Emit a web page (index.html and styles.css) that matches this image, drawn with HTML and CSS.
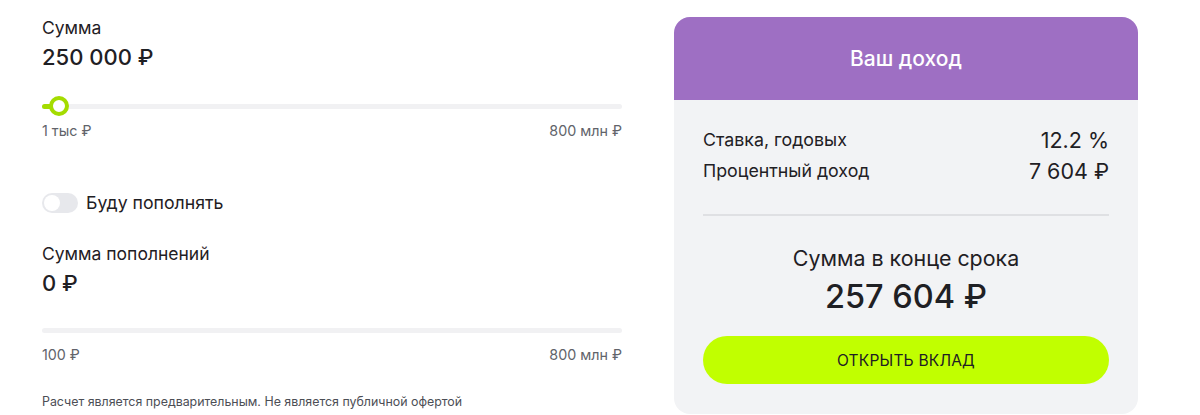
FILE: index.html
```html
<!DOCTYPE html>
<html lang="ru">
<head>
<meta charset="utf-8">
<link rel="stylesheet" href="styles.css">
</head>
<body>
<div class="page">
  <div class="calc">
    <div class="field">
      <div class="label">Сумма</div>
      <div class="value">250 000 ₽</div>
      <div class="slider">
        <div class="track"><div class="fill" style="width:17px"></div><div class="thumb" style="left:17px"></div></div>
      </div>
      <div class="range"><span>1 тыс ₽</span><span>800 млн ₽</span></div>
    </div>
    <div class="toggle-row">
      <div class="toggle"><div class="knob"></div></div>
      <span class="toggle-label">Буду пополнять</span>
    </div>
    <div class="field field2">
      <div class="label">Сумма пополнений</div>
      <div class="value">0 ₽</div>
      <div class="slider">
        <div class="track"></div>
      </div>
      <div class="range"><span>100 ₽</span><span>800 млн ₽</span></div>
    </div>
    <div class="note">Расчет является предварительным. Не является публичной офертой</div>
  </div>
  <div class="card">
    <div class="card-head">Ваш доход</div>
    <div class="card-body">
      <div class="row"><span class="row-label">Ставка, годовых</span><span class="row-value">12.2 %</span></div>
      <div class="row"><span class="row-label">Процентный доход</span><span class="row-value">7 604 ₽</span></div>
      <div class="divider"></div>
      <div class="total-label">Сумма в конце срока</div>
      <div class="total">257 604 ₽</div>
      <button class="btn">ОТКРЫТЬ ВКЛАД</button>
    </div>
  </div>
</div>
</body>
</html>
```
FILE: styles.css
```css
* { box-sizing: border-box; }
html, body { margin: 0; padding: 0; background: #fff; }
body {
  font-family: Inter, "Open Sans", sans-serif;
  color: #1f2024;
  width: 1200px;
  height: 415px;
  overflow: hidden;
}
.page {
  display: flex;
  padding: 17px 0 0 42px;
  gap: 52px;
}
.calc {
  width: 580px;
  display: flex;
  flex-direction: column;
}
.label {
  font-size: 17.5px;
  line-height: 22px;
}
.value {
  font-size: 22px;
  line-height: 28px;
  margin-top: 4px;
  font-weight: 500;
}
.slider {
  margin-top: 30px;
  height: 10px;
  display: flex;
  align-items: center;
}
.track {
  position: relative;
  width: 100%;
  height: 5px;
  border-radius: 3px;
  background: #f1f1f3;
}
.fill {
  position: absolute;
  left: 0; top: 0; bottom: 0;
  background: #a4dc00;
  border-radius: 3px;
}
.thumb {
  position: absolute;
  top: 50%;
  width: 20px;
  height: 20px;
  margin-left: -10px;
  margin-top: -10px;
  border-radius: 50%;
  background: #fff;
  border: 4px solid #a4dc00;
}
.range {
  display: flex;
  justify-content: space-between;
  font-size: 14.3px;
  line-height: 16px;
  color: #61636a;
  margin-top: 12px;
}
.toggle-row {
  display: flex;
  align-items: center;
  gap: 8px;
  margin-top: 53px;
}
.toggle {
  width: 36px;
  height: 20px;
  border-radius: 10px;
  background: #e7e8ec;
  padding: 2px;
}
.knob {
  width: 16px;
  height: 16px;
  border-radius: 50%;
  background: #fff;
}
.toggle-label {
  font-size: 17.7px;
  line-height: 22px;
}
.field2 { margin-top: 29px; }
.field2 .value { margin-top: 4px; }
.field2 .slider { margin-top: 28px; }
.note {
  margin-top: 31px;
  font-size: 12.4px;
  line-height: 15px;
  color: #4c4e55;
}
.card {
  width: 464px;
  height: 397px;
  border-radius: 16px;
  overflow: hidden;
  background: #f2f3f5;
  display: flex;
  flex-direction: column;
}
.card-head {
  background: #9e6fc3;
  color: #fff;
  height: 83px;
  display: flex;
  align-items: center;
  justify-content: center;
  font-size: 21px;
  font-weight: 500;
}
.card-body {
  padding: 24px 29px 0 29px;
  display: flex;
  flex-direction: column;
}
.row {
  display: flex;
  justify-content: space-between;
  align-items: center;
  height: 31px;
}
.row-label { font-size: 17.8px; }
.row-value { font-size: 21.5px; }
.divider {
  height: 2px;
  background: #dfe0e3;
  margin-top: 28px;
}
.total-label {
  text-align: center;
  font-size: 21.4px;
  line-height: 26px;
  margin-top: 29px;
}
.total {
  text-align: center;
  font-size: 32.5px;
  line-height: 38px;
  font-weight: 500;
  margin-top: 7px;
}
.btn {
  margin-top: 20px;
  height: 48px;
  border: none;
  border-radius: 24px;
  background: #c1ff00;
  font-family: inherit;
  font-size: 15.5px;
  color: #1f2024;
  letter-spacing: 0.2px;
}
```
